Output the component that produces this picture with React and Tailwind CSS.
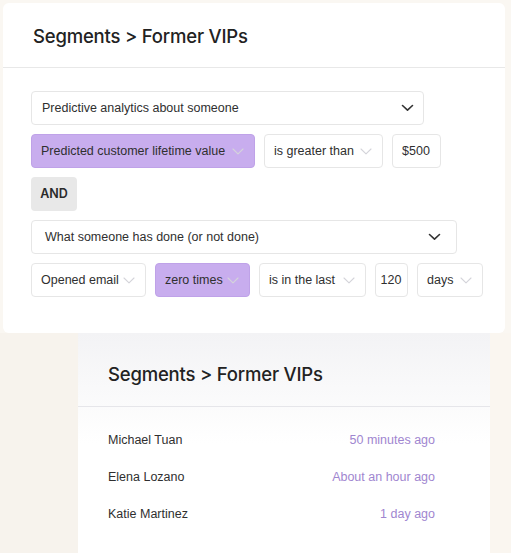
import React from "react";

const body = { fontFamily: "'Liberation Sans', Arial, sans-serif" };
const title = { fontFamily: "Inter, 'Noto Sans', sans-serif" };

function Chevron({ dark }) {
  return dark ? (
    <svg width="13" height="8" viewBox="0 0 13 8" fill="none" className="shrink-0">
      <path d="M1.5 1.5 L6.5 6.2 L11.5 1.5" stroke="#333333" strokeWidth="1.6" strokeLinecap="round" strokeLinejoin="round" />
    </svg>
  ) : (
    <svg width="12" height="7" viewBox="0 0 12 7" fill="none" className="shrink-0">
      <path d="M1 1 L6 5.8 L11 1" stroke="#d4d4da" strokeWidth="1.1" strokeLinecap="round" strokeLinejoin="round" />
    </svg>
  );
}

function Box({ w, children, purple, chevron = true, center }) {
  return (
    <div
      className={
        "h-[34px] rounded-[4px] border flex items-center text-[12.5px] text-[#2f2f2f] pl-[9px] pr-[10px] " +
        (purple ? "bg-[#c8adee] border-[#bfa2e8] " : "bg-white border-[#e6e6e6] ") +
        (center ? "justify-center px-0 " : "justify-between ")
      }
      style={{ width: w }}
    >
      <span className="whitespace-nowrap">{children}</span>
      {chevron && <Chevron />}
    </div>
  );
}

export default function App() {
  return (
    <div className="w-[511px] h-[553px] overflow-hidden bg-[#faf7f2]" style={body}>
      <div className="pt-[3px] pl-[3px] pr-[6px]">
        <div className="bg-white rounded-[6px] h-[330px] flex flex-col">
          <div className="h-[65px] flex items-center pt-[4px] pl-[30px] border-b border-[#e8e8e8]">
            <h1 className="text-[18.5px] font-medium text-[#222] tracking-[-0.2px]" style={title}>Segments &gt; Former VIPs</h1>
          </div>
          <div className="pt-[23px] pl-[28px] flex flex-col gap-[9px]">
            <div className="flex">
              <div className="w-[393px] h-[34px] rounded-[4px] border border-[#e6e6e6] flex items-center justify-between pl-[10px] pr-[9px] text-[12.5px] text-[#2f2f2f]">
                <span>Predictive analytics about someone</span>
                <Chevron dark />
              </div>
            </div>
            <div className="flex gap-[9px]">
              <Box w={224} purple>Predicted customer lifetime value</Box>
              <Box w={119}>is greater than</Box>
              <Box w={49} chevron={false} center>$500</Box>
            </div>
            <div className="flex">
              <div className="w-[46px] h-[34px] rounded-[4px] bg-[#e8e8e8] flex items-center justify-center text-[12.5px] font-semibold text-[#2a2a2a]" style={title}>
                AND
              </div>
            </div>
            <div className="flex">
              <div className="w-[426px] h-[34px] rounded-[4px] border border-[#e6e6e6] flex items-center justify-between pl-[13px] pr-[15px] text-[12.5px] text-[#2f2f2f]">
                <span>What someone has done (or not done)</span>
                <Chevron dark />
              </div>
            </div>
            <div className="flex gap-[9px]">
              <Box w={115}>Opened email</Box>
              <Box w={95} purple>zero times</Box>
              <Box w={107}>is in the last</Box>
              <Box w={33} chevron={false} center>120</Box>
              <Box w={66}>days</Box>
            </div>
          </div>
        </div>
      </div>
      <div className="flex">
        <div className="w-[78px] bg-[#f7f3ed] h-[220px]" />
        <div className="w-[412px] h-[220px] bg-gradient-to-b from-[#f3f3f5] via-white to-white flex flex-col">
          <div className="h-[74px] shrink-0 flex items-end pb-[17px] pl-[30px] border-b border-[#e6e6ea]">
            <h2 className="text-[18.5px] font-medium text-[#222] tracking-[-0.2px]" style={title}>Segments &gt; Former VIPs</h2>
          </div>
          <div className="pl-[30px] pr-[55px] pt-[24px] flex flex-col gap-[19px] text-[12.5px]">
            <div className="flex justify-between h-[18px] items-center">
              <span className="text-[#2f2f2f]">Michael Tuan</span>
              <span className="text-[#9f86d0]">50 minutes ago</span>
            </div>
            <div className="flex justify-between h-[18px] items-center">
              <span className="text-[#2f2f2f]">Elena Lozano</span>
              <span className="text-[#9f86d0]">About an hour ago</span>
            </div>
            <div className="flex justify-between h-[18px] items-center">
              <span className="text-[#2f2f2f]">Katie Martinez</span>
              <span className="text-[#9f86d0]">1 day ago</span>
            </div>
          </div>
        </div>
        <div className="flex-1 bg-[#faf6f0]" />
      </div>
    </div>
  );
}
